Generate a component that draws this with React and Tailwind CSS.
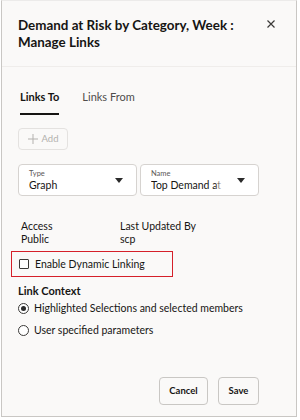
import { useState } from 'react';

function Caret() {
    return (
        <svg width="8" height="5" viewBox="0 0 8 5" className="shrink-0">
            <path d="M0 0h8L4 5z" fill="#2b2b2b" />
        </svg>
    );
}

function SelectBox({ label, value }) {
    return (
        <div className="flex-1 h-[32px] bg-white border border-[#d6d3d0] rounded-[4px] flex items-center pl-[10px] pr-[13px] overflow-hidden">
            <div className="flex-1 min-w-0 mr-[14px] relative">
                <div className="text-[7.5px] leading-[9px] text-[#5a5856]">{label}</div>
                <div className="text-[10.5px] leading-[14px] text-[#161513] whitespace-nowrap overflow-hidden">{value}</div>
                <div className="absolute right-0 bottom-0 w-[8px] h-[14px] bg-gradient-to-r from-transparent to-white" />
            </div>
            <Caret />
        </div>
    );
}

function Radio({ checked, label, onClick }) {
    return (
        <div onClick={onClick} className="flex items-center gap-[5px] h-[16px] cursor-pointer">
            <span className="w-[11px] h-[11px] rounded-full border border-[#3b3a38] flex items-center justify-center bg-white">
                {checked && <span className="w-[5px] h-[5px] rounded-full bg-[#2b2b2b]" />}
            </span>
            <span className="text-[10.5px] leading-[14px] text-[#161513] whitespace-nowrap">{label}</span>
        </div>
    );
}

export default function App() {
    const [tab, setTab] = useState('to');
    const [dynamic, setDynamic] = useState(false);
    const [context, setContext] = useState('highlighted');

    return (
        <div className="w-[300px] h-[420px] bg-white" style={{ fontFamily: 'Lato, "Liberation Sans", sans-serif' }}>
            <div className="w-[296px] h-[417px] ml-[1px] bg-[#faf9f8] border border-[#c9c7c4] border-t-[#ecebea] flex flex-col">
                <div className="flex items-start justify-between pl-[16px] pr-[21px] pt-[16px] h-[66px] border-b border-[#efedeb]">
                    <div className="text-[13.4px] font-bold leading-[17px] text-[#161513]">
                        Demand at Risk by Category, Week :<br />Manage Links
                    </div>
                    <button className="mt-[3px]">
                        <svg width="8" height="8" viewBox="0 0 8 8">
                            <path d="M0.5 0.5l7 7M7.5 0.5l-7 7" stroke="#3b3a38" strokeWidth="1.2" />
                        </svg>
                    </button>
                </div>

                <div className="px-[16px] flex flex-col">
                    <div className="flex gap-[23px] mt-[23px] ml-[2px]">
                        <button onClick={() => setTab('to')} className={"pb-[9px] text-[11px] leading-[14px] border-b-2 " + (tab === 'to' ? 'font-bold text-[#161513] border-[#161513]' : 'text-[#4f4d4b] border-transparent')}>
                            Links To
                        </button>
                        <button onClick={() => setTab('from')} className={"pb-[9px] text-[11px] leading-[14px] border-b-2 " + (tab === 'from' ? 'font-bold text-[#161513] border-[#161513]' : 'text-[#4f4d4b] border-transparent')}>
                            Links From
                        </button>
                    </div>

                    <button disabled className="mt-[13px] w-[50px] h-[22px] border border-[#e4e2e0] rounded-[4px] flex items-center justify-center gap-[4px] text-[#b3b1ae] text-[9.5px]">
                        <svg width="10" height="10" viewBox="0 0 10 10">
                            <path d="M5 0v10M0 5h10" stroke="#b3b1ae" strokeWidth="1" />
                        </svg>
                        Add
                    </button>

                    <div className="flex gap-[3px] mt-[14px] w-[241px]">
                        <SelectBox label="Type" value="Graph" />
                        <SelectBox label="Name" value="Top Demand at Risk" />
                    </div>

                    <div className="flex mt-[24px] ml-[3px] text-[10.5px] leading-[13px] text-[#161513]">
                        <div className="w-[99px]">
                            <div>Access</div>
                            <div>Public</div>
                        </div>
                        <div>
                            <div>Last Updated By</div>
                            <div>scp</div>
                        </div>
                    </div>

                    <div className="mt-[5px] -ml-[7px] w-[162px] h-[26px] border border-[#d5202a] flex items-center pl-[7px] gap-[6px]">
                        <span onClick={() => setDynamic(!dynamic)} className="w-[10px] h-[10px] border border-[#3b3a38] rounded-[1px] bg-white cursor-pointer flex items-center justify-center text-[8px] leading-none">
                            {dynamic ? '✓' : ''}
                        </span>
                        <span className="text-[10.5px] leading-[14px] text-[#161513]">Enable Dynamic Linking</span>
                    </div>

                    <div className="mt-[7px] text-[11px] leading-[14px] font-bold text-[#161513]">Link Context</div>
                    <div className="flex flex-col gap-[6px] mt-[2px]">
                        <Radio checked={context === 'highlighted'} onClick={() => setContext('highlighted')} label="Highlighted Selections and selected members" />
                        <Radio checked={context === 'user'} onClick={() => setContext('user')} label="User specified parameters" />
                    </div>
                </div>

                <div className="mt-auto mb-[11px] flex justify-end gap-[10px] pr-[37px]">
                    <button className="w-[49px] h-[28px] border border-[#c9c7c4] rounded-[4px] bg-[#faf9f8] text-[9.5px] font-bold text-[#161513]">Cancel</button>
                    <button className="w-[41px] h-[28px] border border-[#c9c7c4] rounded-[4px] bg-[#faf9f8] text-[9.5px] font-bold text-[#161513]">Save</button>
                </div>
            </div>
        </div>
    );
}
